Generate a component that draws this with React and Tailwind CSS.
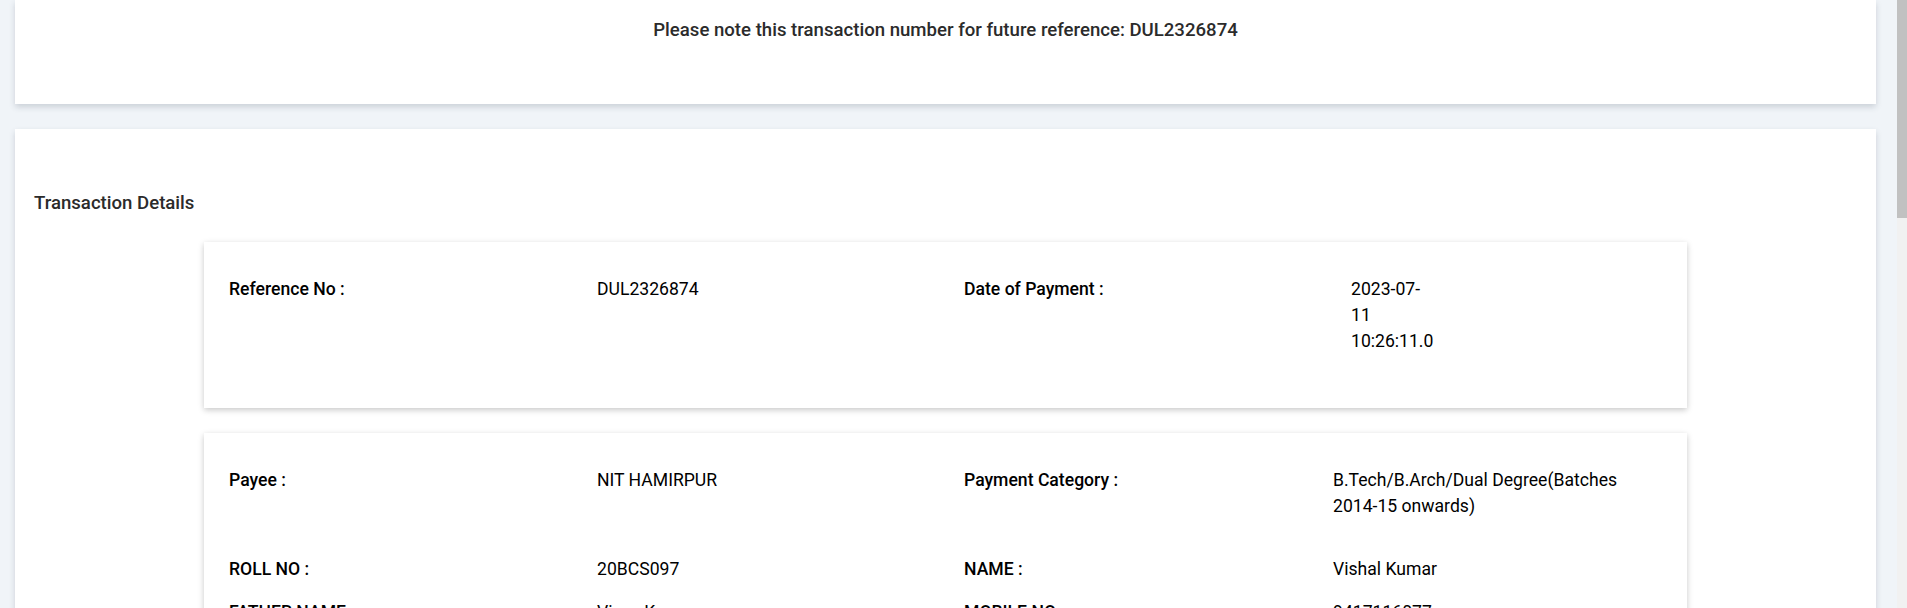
const summary = [
  { label: 'Reference No :', value: 'DUL2326874', label2: 'Date of Payment :', value2: ['2023-07-', '11', '10:26:11.0'] },
]

const details = [
  { label: 'Payee :', value: 'NIT HAMIRPUR', label2: 'Payment Category :', value2: 'B.Tech/B.Arch/Dual Degree(Batches 2014-15 onwards)', gap: 'pb-[37px]' },
  { label: 'ROLL NO :', value: '20BCS097', label2: 'NAME :', value2: 'Vishal Kumar', gap: 'pb-[17px]' },
  { label: 'FATHER NAME :', value: 'Vinay Kumar', label2: 'MOBILE NO :', value2: '9417116077', gap: 'pb-[17px]' },
]

function Scrollbar() {
  return (
    <div className="w-[10px] shrink-0 bg-[#f1f1f1] flex flex-col">
      <div className="h-[218px] bg-[#c1c1c1]" />
    </div>
  )
}

export default function App() {
  return (
    <div
      className="h-[608px] w-full overflow-hidden flex bg-[#f0f4f8] text-[17.6px] leading-[26px]"
      style={{ fontFamily: 'Roboto, "Liberation Sans", sans-serif' }}
    >
      <div className="flex-1 min-w-0 pl-[15px] pr-[21px] flex flex-col gap-[25px]">
        {/* notice card */}
        <div className="h-[104px] shrink-0 bg-white shadow-[0_3px_6px_rgba(40,50,70,0.18)] pt-[17px] text-center">
          <p className="font-medium text-[18.6px] text-[#2b2b2b]">
            Please note this transaction number for future reference: DUL2326874
          </p>
        </div>

        {/* transaction details */}
        <div className="flex-1 bg-white shadow-[0_3px_6px_rgba(40,50,70,0.18)] pt-[61px] px-[19px]">
          <h2 className="font-medium text-[18.6px] text-[#2b2b2b]">Transaction Details</h2>

          <div className="mx-[170px] mt-[26px] flex flex-col gap-[25px]">
            <div className="bg-white shadow-[0_2px_6px_rgba(0,0,0,0.22)] pt-[34px] pb-[38px] px-[25px]">
              {summary.map((row) => (
                <div key={row.label} className="grid grid-cols-[368px_367px_387px_1fr] pb-[16px] text-black">
                  <div className="font-medium">{row.label}</div>
                  <div>{row.value}</div>
                  <div className="font-medium">{row.label2}</div>
                  <div>
                    {row.value2.map((line) => (
                      <div key={line}>{line}</div>
                    ))}
                  </div>
                </div>
              ))}
            </div>

            <div className="bg-white shadow-[0_2px_6px_rgba(0,0,0,0.22)] pt-[34px] pb-[38px] px-[25px]">
              {details.map((row) => (
                <div key={row.label} className={`grid grid-cols-[368px_367px_369px_1fr] text-black ${row.gap}`}>
                  <div className="font-medium">{row.label}</div>
                  <div>{row.value}</div>
                  <div className="font-medium">{row.label2}</div>
                  <div className="w-[310px]">{row.value2}</div>
                </div>
              ))}
            </div>
          </div>
        </div>
      </div>
      <Scrollbar />
    </div>
  )
}
